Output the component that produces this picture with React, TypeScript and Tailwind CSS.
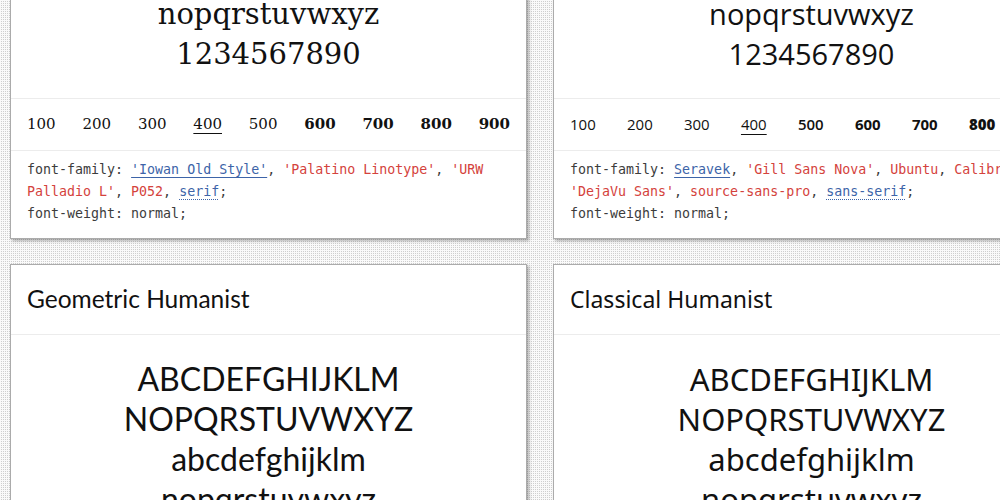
import React from "react";

type Token = { text: string; kind: "plain" | "string" | "named" | "generic" };

type Stack = {
  title: string;
  sampleFont: string;
  weightFont: string;
  headerFont: string;
  weightStyles: Record<number, string>;
  family: Token[];
};

const weights = [100, 200, 300, 400, 500, 600, 700, 800, 900];

const serifWeights: Record<number, string> = {
  100: "font-normal",
  200: "font-normal",
  300: "font-normal",
  400: "font-normal",
  500: "font-normal",
  600: "font-semibold",
  700: "font-semibold",
  800: "font-bold",
  900: "font-black",
};

// Humanist sans: light cuts fall back to regular, 500 and up go bold.
const sansWeights: Record<number, string> = {
  100: "font-normal",
  200: "font-normal",
  300: "font-normal",
  400: "font-normal",
  500: "font-semibold",
  600: "font-bold",
  700: "font-bold",
  800: "font-extrabold",
  900: "font-black",
};

const fullWeights: Record<number, string> = {
  100: "font-thin",
  200: "font-extralight",
  300: "font-light",
  400: "font-normal",
  500: "font-medium",
  600: "font-semibold",
  700: "font-bold",
  800: "font-extrabold",
  900: "font-black",
};

const stacks: Stack[] = [
  {
    title: "Old Style",
    sampleFont: "font-['DejaVu_Serif',serif] text-[29px]",
    weightFont: "font-['DejaVu_Serif',serif] text-[15px]",
    headerFont: "font-['DejaVu_Serif',serif] text-[22px]",
    weightStyles: serifWeights,
    family: [
      { text: "'Iowan Old Style'", kind: "named" },
      { text: ", ", kind: "plain" },
      { text: "'Palatino Linotype'", kind: "string" },
      { text: ", ", kind: "plain" },
      { text: "'URW Palladio L'", kind: "string" },
      { text: ", ", kind: "plain" },
      { text: "P052", kind: "string" },
      { text: ", ", kind: "plain" },
      { text: "serif", kind: "generic" },
    ],
  },
  {
    title: "Humanist",
    sampleFont: "font-['Open_Sans',sans-serif] text-[29px]",
    weightFont: "font-['Open_Sans',sans-serif] text-[15px]",
    headerFont: "font-['Open_Sans',sans-serif] text-[23px]",
    weightStyles: sansWeights,
    family: [
      { text: "Seravek", kind: "named" },
      { text: ", ", kind: "plain" },
      { text: "'Gill Sans Nova'", kind: "string" },
      { text: ", ", kind: "plain" },
      { text: "Ubuntu", kind: "string" },
      { text: ", ", kind: "plain" },
      { text: "Calibri", kind: "string" },
      { text: ", ", kind: "plain" },
      { text: "'DejaVu Sans'", kind: "string" },
      { text: ", ", kind: "plain" },
      { text: "source-sans-pro", kind: "string" },
      { text: ", ", kind: "plain" },
      { text: "sans-serif", kind: "generic" },
    ],
  },
  {
    title: "Geometric Humanist",
    sampleFont: "font-['Lato',sans-serif] text-[32px]",
    weightFont: "font-['Lato',sans-serif] text-[16px]",
    headerFont: "font-['Lato',sans-serif] text-[24.5px]",
    weightStyles: fullWeights,
    family: [
      { text: "Avenir", kind: "named" },
      { text: ", ", kind: "plain" },
      { text: "Montserrat", kind: "string" },
      { text: ", ", kind: "plain" },
      { text: "Corbel", kind: "string" },
      { text: ", ", kind: "plain" },
      { text: "'URW Gothic'", kind: "string" },
      { text: ", ", kind: "plain" },
      { text: "source-sans-pro", kind: "string" },
      { text: ", ", kind: "plain" },
      { text: "sans-serif", kind: "generic" },
    ],
  },
  {
    title: "Classical Humanist",
    sampleFont: "font-['Noto_Sans',sans-serif] text-[31px]",
    weightFont: "font-['Noto_Sans',sans-serif] text-[16px]",
    headerFont: "font-['Noto_Sans',sans-serif] text-[23px]",
    weightStyles: sansWeights,
    family: [
      { text: "Optima", kind: "named" },
      { text: ", ", kind: "plain" },
      { text: "Candara", kind: "string" },
      { text: ", ", kind: "plain" },
      { text: "'Noto Sans'", kind: "string" },
      { text: ", ", kind: "plain" },
      { text: "source-sans-pro", kind: "string" },
      { text: ", ", kind: "plain" },
      { text: "sans-serif", kind: "generic" },
    ],
  },
];

const sampleLines = [
  "ABCDEFGHIJKLM",
  "NOPQRSTUVWXYZ",
  "abcdefghijklm",
  "nopqrstuvwxyz",
  "1234567890",
];

function TokenSpan({ t }: { t: Token }) {
  if (t.kind === "named")
    return (
      <span className="text-[#3d64a8] underline decoration-[#3d64a8] decoration-1 underline-offset-[3px]">
        {t.text}
      </span>
    );
  if (t.kind === "generic")
    return (
      <span className="text-[#3d64a8] underline decoration-dotted decoration-[#3d64a8] decoration-1 underline-offset-[3px]">
        {t.text}
      </span>
    );
  if (t.kind === "string") return <span className="text-[#d4423c]">{t.text}</span>;
  return <span>{t.text}</span>;
}

function StackCard({ stack }: { stack: Stack }) {
  return (
    <section className="border border-[#ababab] bg-white shadow-[2px_2px_3px_rgba(0,0,0,0.3)]">
      <h2
        className={`flex h-[70px] items-center border-b border-[#ececec] px-4 font-normal text-[#111] ${stack.headerFont}`}
      >
        {stack.title}
      </h2>
      <div
        className={`border-b border-[#ececec] py-6 text-center leading-[40px] text-[#111] ${stack.sampleFont}`}
      >
        {sampleLines.map((l) => (
          <div key={l}>{l}</div>
        ))}
      </div>
      <div
        className={`flex h-[52px] items-center justify-between border-b border-[#ececec] px-4 text-[#111] ${stack.weightFont}`}
      >
        {weights.map((w) => (
          <span
            key={w}
            className={`${stack.weightStyles[w]} ${
              w === 400 ? "underline decoration-1 underline-offset-[4px]" : ""
            }`}
          >
            {w}
          </span>
        ))}
      </div>
      <div className="px-4 pt-2 pb-[13px] font-['DejaVu_Sans_Mono',monospace] text-[13.3px] leading-[22px] text-[#3c3c3c]">
        <div>
          font-family:{" "}
          {stack.family.map((t, i) => (
            <TokenSpan key={i} t={t} />
          ))}
          ;
        </div>
        <div>font-weight: normal;</div>
      </div>
    </section>
  );
}

export default function App() {
  return (
    <div className="h-[500px] w-[1000px] overflow-hidden bg-[#fafafa] bg-[linear-gradient(90deg,#fafafa_1px,transparent_1px),linear-gradient(#fafafa_1px,#cfcfcf_1px)] bg-[length:2px_2px]">
      <div className="-mt-[221px] grid grid-cols-[517px_517px] gap-x-[26px] gap-y-[25px] pl-[10px]">
        {stacks.map((s) => (
          <StackCard key={s.title} stack={s} />
        ))}
      </div>
    </div>
  );
}
